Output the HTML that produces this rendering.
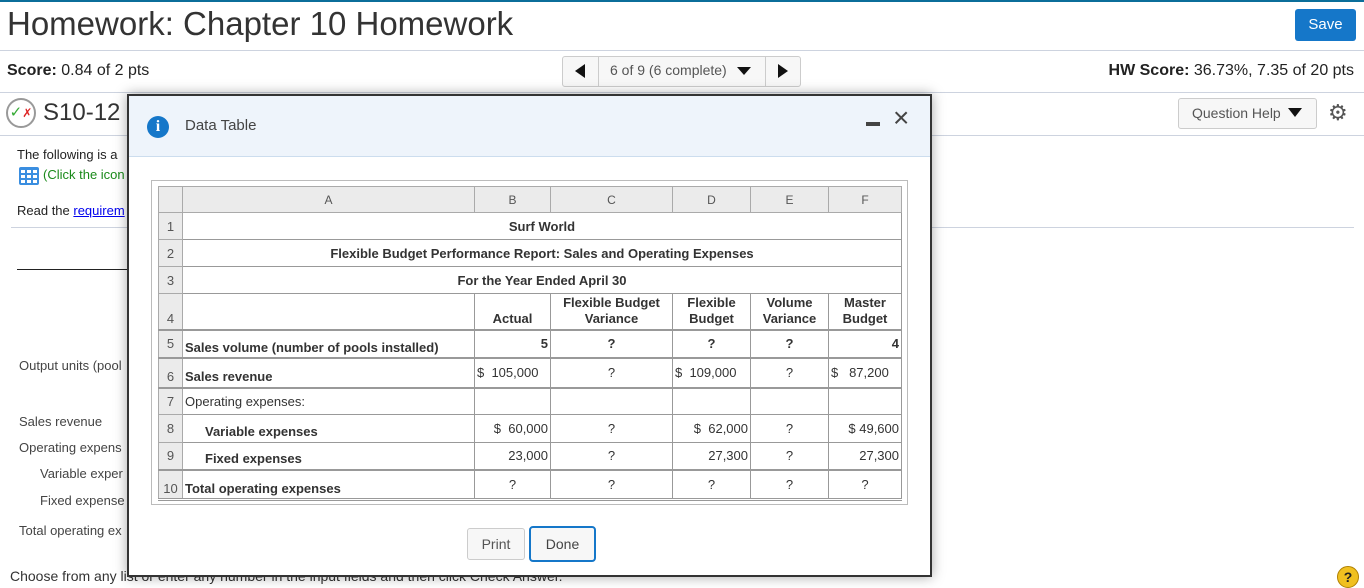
<!DOCTYPE html>
<html><head><meta charset="utf-8"><style>
*{box-sizing:border-box;margin:0;padding:0}
body{width:1364px;height:586px;overflow:hidden;background:#fff;font-family:"Liberation Sans",sans-serif;color:#222;position:relative}
.a{position:absolute;white-space:nowrap}
table{border-collapse:collapse;table-layout:fixed;position:absolute;left:158px;top:186px;font-size:13px;color:#333}
td{border:1px solid #999;overflow:hidden;white-space:nowrap;padding:0 2px}
.h td{background:#ebebeb;text-align:center;color:#555;font-size:12px;border-color:#aaa}
td.n{background:#ebebeb;text-align:center;color:#555;border-color:#aaa}
.b{font-weight:bold}.c{text-align:center}.r{text-align:right}
</style></head><body>
<div class="a" style="left:0;top:0;width:1364px;height:2px;background:#0b6e9a"></div>
<div class="a" style="left:7px;top:5px;font-size:33px;color:#333">Homework: Chapter 10 Homework</div>
<div class="a" style="left:1295px;top:9px;width:61px;height:32px;background:#1577c9;border-radius:3px;color:#fff;font-size:15px;text-align:center;line-height:32px">Save</div>
<div class="a" style="left:0;top:50px;width:1364px;height:1px;background:#cdd3df"></div>
<div class="a" style="left:7px;top:62px;font-size:16px"><b>Score:</b> 0.84 of 2 pts</div>
<div class="a" style="left:562px;top:56px;width:239px;height:31px;border:1px solid #ccc;border-radius:3px;background:#f7f7f7"></div>
<div class="a" style="left:598px;top:56px;width:1px;height:31px;background:#ccc"></div>
<div class="a" style="left:765px;top:56px;width:1px;height:31px;background:#ccc"></div>
<div class="a" style="left:575px;top:64px;width:0;height:0;border-top:7px solid transparent;border-bottom:7px solid transparent;border-right:10px solid #111"></div>
<div class="a" style="left:778px;top:64px;width:0;height:0;border-top:7px solid transparent;border-bottom:7px solid transparent;border-left:10px solid #111"></div>
<div class="a" style="left:610px;top:62px;font-size:14px;color:#555">6 of 9 (6 complete)</div>
<div class="a" style="left:737px;top:67px;border-left:7px solid transparent;border-right:7px solid transparent;border-top:8px solid #111"></div>
<div class="a" style="right:10px;top:62px;font-size:16px"><b>HW Score:</b> 36.73%, 7.35 of 20 pts</div>
<div class="a" style="left:0;top:92px;width:1364px;height:1px;background:#cdd3df"></div>
<div class="a" style="left:6px;top:98px;width:30px;height:30px;border:2px solid #999;border-radius:50%;font-size:15px;line-height:26px;text-align:center"><span style="color:#3a3">✓</span><span style="color:#d22;font-size:12px">✗</span></div>
<div class="a" style="left:43px;top:99px;font-size:24px;color:#333">S10-12</div>
<div class="a" style="left:1178px;top:98px;width:139px;height:31px;border:1px solid #ccc;border-radius:3px;background:#f7f7f7;font-size:14px;color:#555;line-height:29px;padding-left:13px">Question Help</div>
<div class="a" style="left:1288px;top:108px;border-left:7px solid transparent;border-right:7px solid transparent;border-top:9px solid #111"></div>
<div class="a" style="left:1328px;top:100px;font-size:22px;color:#555">⚙</div>
<div class="a" style="left:0;top:135px;width:1364px;height:1px;background:#cdd3df"></div>
<div class="a" style="left:17px;top:147px;font-size:13px">The following is a</div>
<svg class="a" style="left:19px;top:167px" width="20" height="18" viewBox="0 0 20 18"><rect width="20" height="18" rx="2" fill="#3a8ee0"/><g fill="#fff"><rect x="2" y="3" width="4" height="3"/><rect x="8" y="3" width="4" height="3"/><rect x="14" y="3" width="4" height="3"/><rect x="2" y="8" width="4" height="3"/><rect x="8" y="8" width="4" height="3"/><rect x="14" y="8" width="4" height="3"/><rect x="2" y="13" width="4" height="3"/><rect x="8" y="13" width="4" height="3"/><rect x="14" y="13" width="4" height="3"/></g></svg>
<div class="a" style="left:43px;top:167px;font-size:13px;color:#1a8a1a">(Click the icon</div>
<div class="a" style="left:17px;top:203px;font-size:13px">Read the <span style="color:#00e;text-decoration:underline">requirem</span></div>
<div class="a" style="left:11px;top:227px;width:1343px;height:1px;background:#cdd3df"></div>
<div class="a" style="left:17px;top:269px;width:110px;height:1px;background:#222"></div>
<div class="a" style="left:19px;top:358px;font-size:13px;color:#444">Output units (pool</div>
<div class="a" style="left:19px;top:414px;font-size:13px;color:#444">Sales revenue</div>
<div class="a" style="left:19px;top:440px;font-size:13px;color:#444">Operating expens</div>
<div class="a" style="left:40px;top:466px;font-size:13px;color:#444">Variable exper</div>
<div class="a" style="left:40px;top:493px;font-size:13px;color:#444">Fixed expense</div>
<div class="a" style="left:19px;top:523px;font-size:13px;color:#444">Total operating ex</div>
<div class="a" style="left:10px;top:568px;font-size:14px;color:#333">Choose from any list or enter any number in the input fields and then click Check Answer.</div>
<div class="a" style="left:1337px;top:566px;width:22px;height:22px;border-radius:50%;background:#f0c020;border:1px solid #b08000;text-align:center;font-size:14px;font-weight:bold;line-height:20px">?</div>

<div class="a" style="left:127px;top:94px;width:805px;height:483px;background:#fff;border:2px solid #333;box-shadow:0 0 12px rgba(0,0,0,.35)">
<div class="a" style="left:0;top:0;width:801px;height:61px;background:#eef4fb;border-bottom:1px solid #cde"></div>
<div class="a" style="left:18px;top:20px;width:22px;height:22px;border-radius:50%;background:#1577c9;color:#fff;font:bold 16px 'Liberation Serif',serif;text-align:center;line-height:22px">i</div>
<div class="a" style="left:56px;top:21px;font-size:15px;color:#444">Data Table</div>
<div class="a" style="left:737px;top:26px;width:14px;height:4px;background:#444"></div>
<div class="a" style="left:764px;top:6px;font-size:28px;color:#444;font-weight:300">×</div>
<div class="a" style="left:22px;top:84px;width:757px;height:325px;border:1px solid #bbb"></div>
<div class="a" style="left:338px;top:432px;width:58px;height:32px;border:1px solid #ccc;border-radius:3px;background:#f7f7f7;font-size:14px;color:#555;text-align:center;line-height:30px">Print</div>
<div class="a" style="left:400px;top:430px;width:67px;height:36px;border:2px solid #1577c9;border-radius:4px;background:#f7f7f7;font-size:14px;color:#444;text-align:center;line-height:32px">Done</div>
</div>

<table>
<colgroup><col style="width:24px"><col style="width:292px"><col style="width:76px"><col style="width:122px"><col style="width:78px"><col style="width:78px"><col style="width:73px"></colgroup>
<tr class="h" style="height:26px"><td></td><td>A</td><td>B</td><td>C</td><td>D</td><td>E</td><td>F</td></tr>
<tr style="height:27px"><td class="n">1</td><td colspan="6" class="b c">Surf World</td></tr>
<tr style="height:27px"><td class="n">2</td><td colspan="6" class="b c">Flexible Budget Performance Report: Sales and Operating Expenses</td></tr>
<tr style="height:27px"><td class="n">3</td><td colspan="6" class="b c">For the Year Ended April 30</td></tr>
<tr style="height:36px;line-height:16px"><td class="n" style="vertical-align:bottom;padding-bottom:2px">4</td><td></td><td class="b c" style="vertical-align:bottom;padding-bottom:2px">Actual</td><td class="b c">Flexible Budget<br>Variance</td><td class="b c">Flexible<br>Budget</td><td class="b c">Volume<br>Variance</td><td class="b c">Master<br>Budget</td></tr>
<tr style="height:28px;border-top:2px solid #999"><td class="n">5</td><td class="b" style="padding-top:8px">Sales volume (number of pools installed)</td><td class="b r">5</td><td class="b c">?</td><td class="b c">?</td><td class="b c">?</td><td class="b r">4</td></tr>
<tr style="height:30px;border-top:2px solid #999"><td class="n" style="padding-top:8px">6</td><td class="b" style="padding-top:8px">Sales revenue</td><td>$&nbsp;&nbsp;105,000</td><td class="c">?</td><td>$&nbsp;&nbsp;109,000</td><td class="c">?</td><td>$&nbsp;&nbsp;&nbsp;87,200</td></tr>
<tr style="height:27px;border-top:2px solid #999"><td class="n">7</td><td>Operating expenses:</td><td></td><td></td><td></td><td></td><td></td></tr>
<tr style="height:28px"><td class="n">8</td><td class="b" style="padding-left:22px;padding-top:6px">Variable expenses</td><td class="r">$&nbsp;&nbsp;60,000</td><td class="c">?</td><td class="r">$&nbsp;&nbsp;62,000</td><td class="c">?</td><td class="r">$ 49,600</td></tr>
<tr style="height:27px"><td class="n">9</td><td class="b" style="padding-left:22px;padding-top:6px">Fixed expenses</td><td class="r">23,000</td><td class="c">?</td><td class="r">27,300</td><td class="c">?</td><td class="r">27,300</td></tr>
<tr style="height:30px;border-top:2px solid #999;border-bottom:3px double #999"><td class="n" style="padding:8px 0 0">10</td><td class="b" style="padding-top:8px">Total operating expenses</td><td class="c">?</td><td class="c">?</td><td class="c">?</td><td class="c">?</td><td class="c">?</td></tr>
</table>
</body></html>
